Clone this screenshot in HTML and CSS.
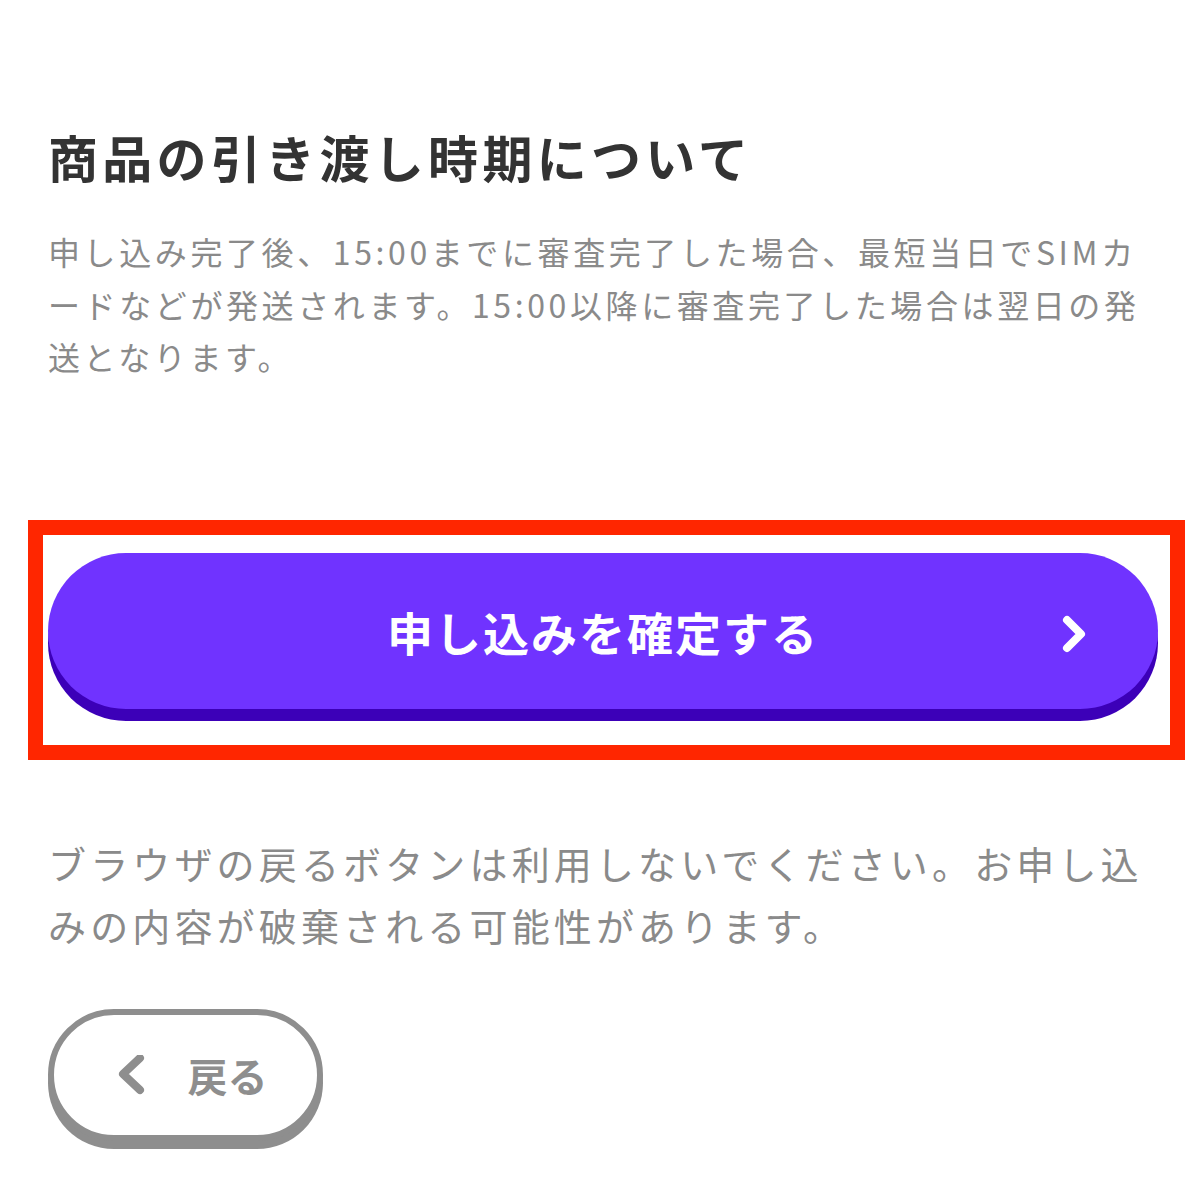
FILE: index.html
```html
<!DOCTYPE html>
<html lang="ja">
<head>
    <meta charset="UTF-8">
    <meta name="viewport" content="width=device-width, initial-scale=1.0">
    <title>お申し込み内容の確認</title>
    <link rel="stylesheet" href="styles.css">
</head>
<body>
    <div class="container">
        <h2 class="title">商品の引き渡し時期について</h2>
        <p class="note">申し込み完了後、15:00までに審査完了した場合、最短当日でSIMカードなどが発送されます。15:00以降に審査完了した場合は翌日の発送となります。</p>

        <div class="submit-wrap">
            <button class="btn-submit" type="button">
                申し込みを確定する
                <svg class="arrow-right" width="24" height="38" viewBox="0 0 24 38">
                    <polyline points="5,5 19,19 5,33" fill="none" stroke="#fff" stroke-width="8" stroke-linecap="round" stroke-linejoin="round"/>
                </svg>
            </button>
        </div>

        <p class="warning">ブラウザの戻るボタンは利用しないでください。お申し込みの内容が破棄される可能性があります。</p>

        <button class="btn-back" type="button">
            <svg width="30" height="40" viewBox="0 0 30 40">
                <polyline points="22,3 5,19 22,35" fill="none" stroke="#8e8e8e" stroke-width="8" stroke-linecap="round" stroke-linejoin="round"/>
            </svg>
            <span>戻る</span>
        </button>
    </div>
</body>
</html>
```

FILE: styles.css
```css
*{
    padding: 0;
    margin: 0;
    box-sizing: border-box;
}
body{
    background-color: #fff;
    font-family: "Noto Sans CJK JP", "Noto Sans", sans-serif;
}
.container{
    padding: 121px 45px 60px 48px;
}
.title{
    font-size: 50px;
    line-height: 70px;
    font-weight: 700;
    letter-spacing: 4.3px;
    color: #333;
}
.note{
    margin-top: 34px;
    font-size: 32px;
    line-height: 52.5px;
    letter-spacing: 3.6px;
    color: #8a8a8a;
}
.submit-wrap{
    position: relative;
    margin-top: 170px;
}
/* red highlight frame */
.submit-wrap::after{
    content: "";
    position: absolute;
    left: -20px;
    right: -27px;
    top: -33px;
    bottom: -51px;
    border: 15px solid #ff2600;
    pointer-events: none;
}
.btn-submit{
    position: relative;
    display: flex;
    align-items: center;
    justify-content: center;
    width: 100%;
    height: 156px;
    border: none;
    border-radius: 78px;
    background-color: #7033ff;
    box-shadow: 0 12px 0 #3c00b8;
    color: #fff;
    font-family: inherit;
    font-size: 46px;
    font-weight: 700;
    letter-spacing: 2px;
    cursor: pointer;
}
.arrow-right{
    position: absolute;
    right: 72px;
    top: 62px;
}
.warning{
    margin-top: 123px;
    font-size: 38px;
    line-height: 62px;
    letter-spacing: 4.15px;
    color: #8a8a8a;
}
.btn-back{
    display: flex;
    align-items: center;
    justify-content: center;
    gap: 40px;
    margin-top: 53px;
    padding-left: 14px;
    width: 275px;
    height: 132px;
    border: 6px solid #8e8e8e;
    border-radius: 66px;
    background-color: #fff;
    box-shadow: 0 8px 0 #8e8e8e;
    color: #8e8e8e;
    font-family: inherit;
    font-size: 40px;
    font-weight: 700;
    cursor: pointer;
}
.btn-back span{
    line-height: 1;
}
```
